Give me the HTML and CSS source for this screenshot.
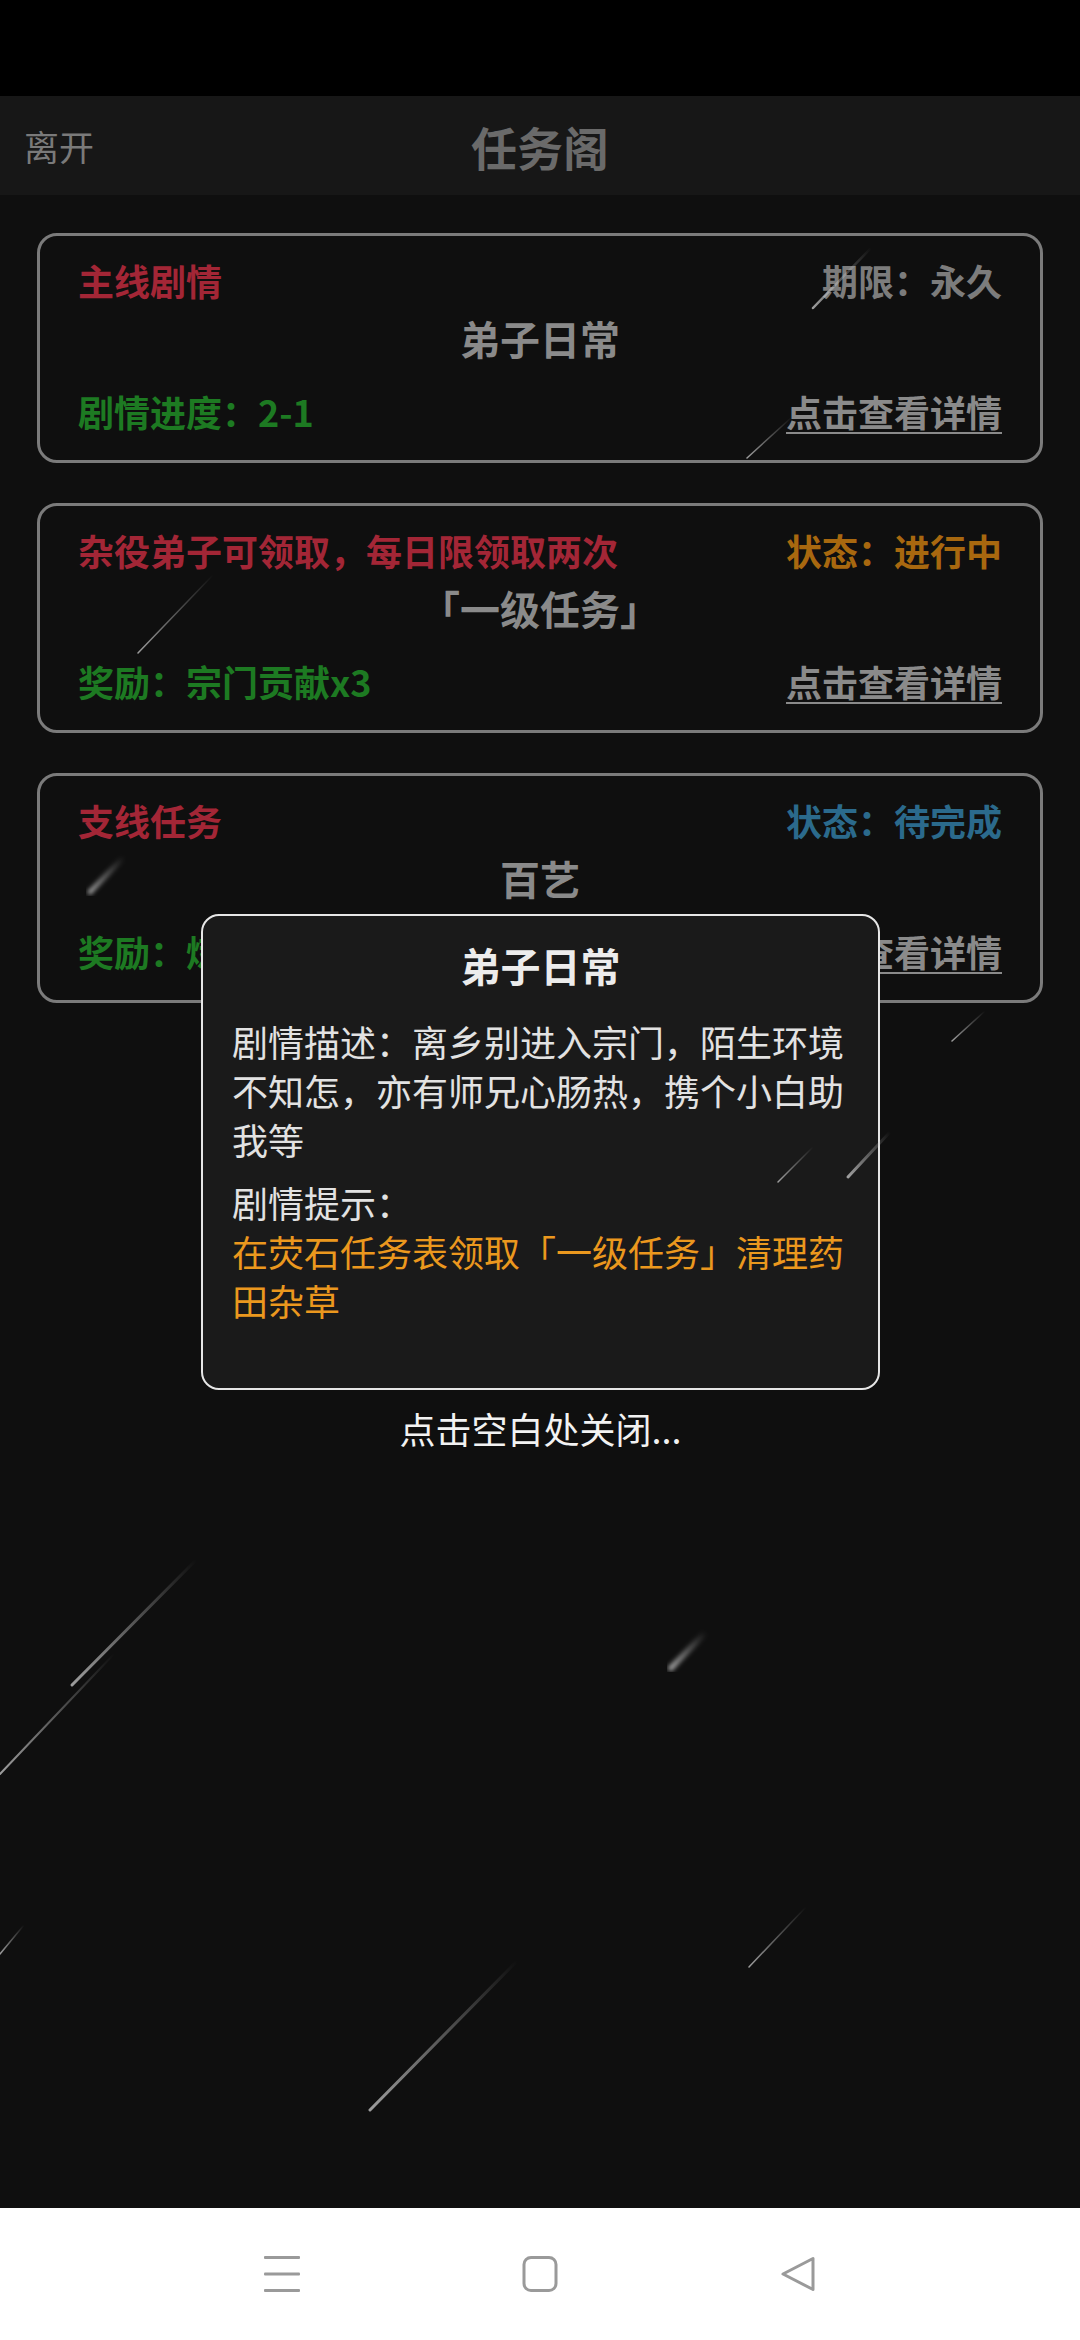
FILE: index.html
```html
<!DOCTYPE html>
<html lang="zh-CN">
<head>
  <meta charset="UTF-8">
  <meta name="viewport" content="width=device-width, initial-scale=1.0">
  <title>任务阁</title>
  <link rel="stylesheet" href="styles.css">
</head>
<body>
  <div class="status-bar"></div>

  <div class="header">
    <span class="leave">离开</span>
    <span class="title">任务阁</span>
    <span></span>
  </div>

  <div class="main">
    <div class="card">
      <div class="row">
        <span class="red">主线剧情</span>
        <span class="gray">期限：永久</span>
      </div>
      <div class="name">弟子日常</div>
      <div class="row row-bottom">
        <span class="green">剧情进度：2-1</span>
        <a class="detail" href="#">点击查看详情</a>
      </div>
    </div>

    <div class="card">
      <div class="row">
        <span class="red">杂役弟子可领取，每日限领取两次</span>
        <span class="orange">状态：进行中</span>
      </div>
      <div class="name">「一级任务」</div>
      <div class="row row-bottom">
        <span class="green">奖励：宗门贡献x3</span>
        <a class="detail" href="#">点击查看详情</a>
      </div>
    </div>

    <div class="card">
      <div class="row">
        <span class="red">支线任务</span>
        <span class="blue">状态：待完成</span>
      </div>
      <div class="name">百艺</div>
      <div class="row row-bottom">
        <span class="green">奖励：炼器心得x1</span>
        <a class="detail" href="#">点击查看详情</a>
      </div>
    </div>
  </div>

  <!-- 剧情弹窗 -->
  <div class="popup">
    <div class="modal">
      <h2>弟子日常</h2>
      <p class="desc">剧情描述：离乡别进入宗门，陌生环境不知怎，亦有师兄心肠热，携个小白助我等</p>
      <p class="tip">剧情提示：</p>
      <p class="tip-text">在荧石任务表领取「一级任务」清理药田杂草</p>
    </div>
    <div class="close-hint">点击空白处关闭...</div>
  </div>

  <!-- 流星 -->
  <svg class="meteors" width="1080" height="2340" viewBox="0 0 1080 2340">
    <defs>
      <linearGradient id="tail" x1="1" y1="0" x2="0" y2="1">
        <stop offset="0" stop-color="#bbb" stop-opacity="0"/>
        <stop offset="1" stop-color="#c0c0c0" stop-opacity="0.8"/>
      </linearGradient>
      <filter id="blur"><feGaussianBlur stdDeviation="2"/></filter>
    </defs>
    <line x1="871" y1="248" x2="813" y2="308" stroke-width="2.5"/>
    <line x1="792" y1="417" x2="747" y2="458" stroke-width="1.5"/>
    <line x1="213" y1="575" x2="138" y2="653" stroke-width="1.5"/>
    <line x1="124" y1="857" x2="90" y2="892" stroke-width="5" filter="url(#blur)"/>
    <line x1="985" y1="1011" x2="952" y2="1041" stroke-width="1.5"/>
    <line x1="813" y1="1147" x2="778" y2="1182" stroke-width="1.5"/>
    <line x1="890" y1="1132" x2="848" y2="1177" stroke-width="3"/>
    <line x1="196" y1="1560" x2="72" y2="1685" stroke-width="3"/>
    <line x1="114" y1="1654" x2="0" y2="1774" stroke-width="2"/>
    <line x1="706" y1="1632" x2="671" y2="1668" stroke-width="6" filter="url(#blur)"/>
    <line x1="24" y1="1925" x2="0" y2="1954" stroke-width="1.5"/>
    <line x1="806" y1="1907" x2="749" y2="1967" stroke-width="1.5"/>
    <line x1="517" y1="1961" x2="370" y2="2110" stroke-width="3"/>
  </svg>

  <div class="nav-bar">
    <svg width="36" height="36" viewBox="0 0 36 36">
      <rect x="0" y="0" width="36" height="3" rx="1"/>
      <rect x="0" y="16.5" width="36" height="3" rx="1"/>
      <rect x="0" y="33" width="36" height="3" rx="1"/>
    </svg>
    <svg width="36" height="36" viewBox="0 0 36 36">
      <rect class="outline" x="2" y="1.5" width="32" height="33" rx="7"/>
    </svg>
    <svg width="36" height="36" viewBox="0 0 36 36">
      <path class="outline" d="M33 2.5 L33 33.5 L3 18 Z"/>
    </svg>
  </div>
</body>
</html>
```

FILE: styles.css
```css
body {
  margin: 0;
  width: 1080px;
  height: 2340px;
  background-color: #0f0f0f;
  font-family: "Noto Sans CJK SC", "Noto Sans", sans-serif;
  display: flex;
  flex-direction: column;
  position: relative;
  overflow: hidden;
}

.status-bar {
  height: 96px;
  background-color: #000;
}

.header {
  height: 99px;
  background-color: #171717;
  display: grid;
  grid-template-columns: 1fr auto 1fr;
  align-items: center;
}

.leave {
  padding-left: 24px;
  font-size: 35px;
  color: #7a7a7a;
}

.title {
  font-size: 46px;
  font-weight: bold;
  color: #6a6a6a;
}

.main {
  flex: 1;
  padding: 38px 37px 0;
  display: flex;
  flex-direction: column;
  gap: 40px;
}

.card {
  height: 230px;
  box-sizing: border-box;
  border: 3px solid #7b7b7b;
  border-radius: 20px;
  padding: 16px 38px 20px;
  font-size: 36px;
  font-weight: bold;
}

.row {
  height: 56px;
  display: flex;
  justify-content: space-between;
  align-items: center;
}

.row-bottom {
  margin-top: 15px;
}

.name {
  height: 60px;
  line-height: 60px;
  text-align: center;
  font-size: 40px;
  color: #8a8a8a;
}

.red { color: #a32636; }
.gray { color: #7c7c7c; }
.green { color: #1d7a22; }
.orange { color: #a8680f; }
.blue { color: #2b6a8c; }

.detail {
  color: #8a8a8a;
  text-decoration: underline;
  text-underline-offset: 5px;
  text-decoration-thickness: 2px;
}

.popup {
  position: absolute;
  top: 914px;
  left: 201px;
  width: 679px;
  display: flex;
  flex-direction: column;
  align-items: center;
}

.modal {
  width: 100%;
  height: 476px;
  box-sizing: border-box;
  background-color: #1a1a1a;
  border: 2px solid #e6e6e6;
  border-radius: 18px;
  padding: 19px 29px;
}

.modal h2 {
  margin: 0;
  height: 60px;
  line-height: 60px;
  text-align: center;
  font-size: 40px;
  font-weight: bold;
  color: #ececec;
}

.modal p {
  margin: 0;
  font-size: 36px;
  line-height: 49px;
  color: #e2e2e2;
}

.modal .desc {
  margin-top: 22px;
}

.modal .tip {
  margin-top: 14px;
}

.modal .tip-text {
  color: #eb981e;
}

.close-hint {
  margin-top: 14px;
  font-size: 36px;
  line-height: 48px;
  color: #f2f2f2;
}

.meteors {
  position: absolute;
  top: 0;
  left: 0;
  pointer-events: none;
}

.meteors line {
  stroke: url(#tail);
  stroke-linecap: round;
}

.nav-bar {
  height: 132px;
  background-color: #fff;
  display: flex;
  justify-content: center;
  align-items: center;
  gap: 222px;
}

.nav-bar svg {
  fill: #9a9a9a;
}

.nav-bar .outline {
  fill: none;
  stroke: #9a9a9a;
  stroke-width: 3;
  stroke-linejoin: round;
}
```
